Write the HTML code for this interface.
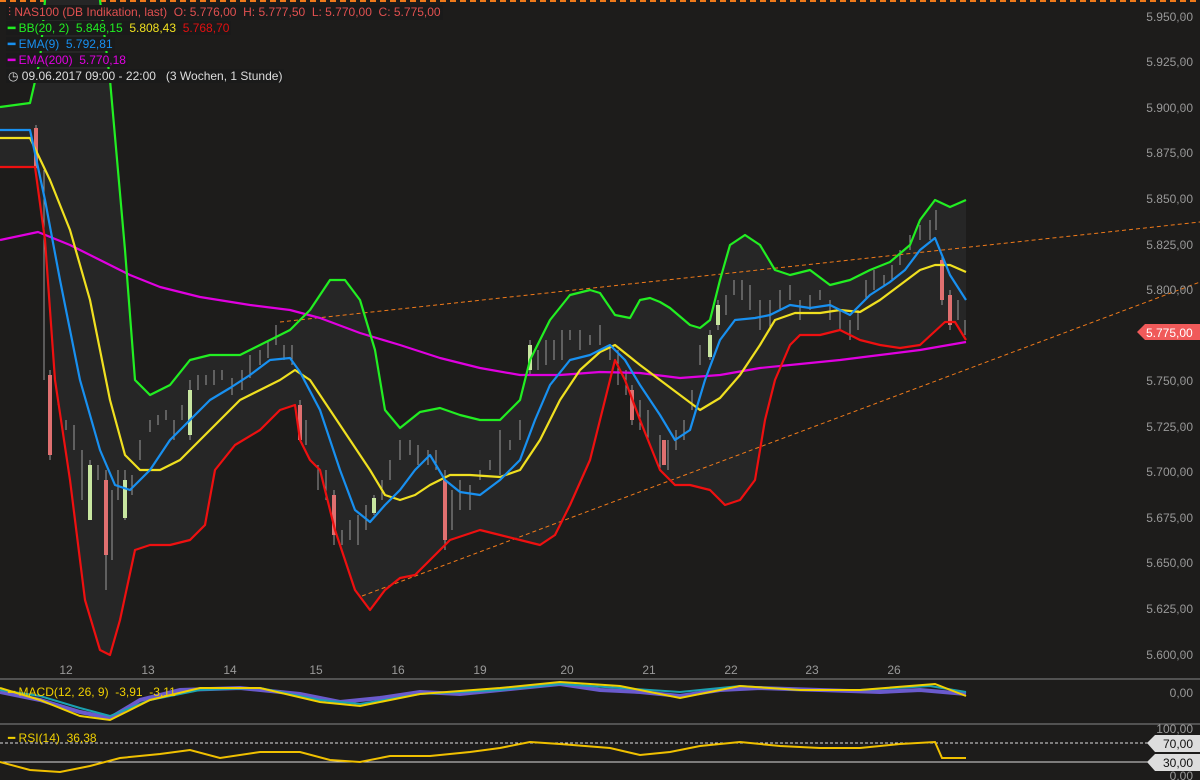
<!DOCTYPE html>
<html><head><meta charset="utf-8"><style>
body{margin:0;background:#1d1c1b;width:1200px;height:780px;overflow:hidden;font-family:"Liberation Sans",sans-serif}
svg{position:absolute;left:0;top:0}
.l{position:absolute;left:6px;font-size:12px;white-space:nowrap;background:#1a1a1a;padding:0 2px}
</style></head><body>
<svg width="1200" height="780">
<line x1="0" y1="1" x2="1200" y2="1" stroke="#f07a1a" stroke-width="2" stroke-dasharray="6,4"/>
<polygon fill="#262626" points="0,107 30,103 40,60 45,0 100,0 110,80 125,250 135,380 150,395 170,385 190,360 210,355 240,355 270,340 290,330 310,310 330,280 345,280 360,300 375,350 385,410 400,428 420,412 440,408 460,415 480,420 500,420 520,400 530,360 550,320 570,295 590,290 600,293 615,315 630,318 640,300 650,298 660,302 670,308 690,325 700,328 710,320 720,280 730,245 745,235 760,245 775,270 790,275 810,270 830,285 850,280 870,270 890,262 910,245 920,220 935,200 950,207 966,200 966,340 955,322 945,322 920,345 900,348 880,345 860,340 840,330 820,335 800,335 790,345 775,380 765,420 755,480 740,500 725,505 710,490 690,485 675,485 660,470 640,420 625,380 615,360 605,400 590,460 570,505 555,535 540,545 520,540 500,535 480,530 450,540 430,560 415,575 400,578 385,590 370,610 355,590 335,530 320,470 310,460 300,440 295,405 280,410 260,430 235,445 215,470 205,525 190,540 170,545 150,545 135,550 120,620 110,655 100,650 85,600 70,480 55,380 45,240 35,167 0,167"/>
<g stroke="#f07a1a" stroke-width="1" stroke-dasharray="4,3"><line x1="280" y1="322" x2="1200" y2="222"/><line x1="362" y1="596" x2="1200" y2="282"/></g>
<g stroke="#999" stroke-width="1">
<path d="M36 125V175M44 170V380M50 370V460M58 400V405M66 420V430M74 425V450M82 450V500M90 460V520M98 465V480M106 470V590M112 490V560M118 470V500M125 470V520M132 475V495M140 440V460M150 420V432M158 415V425M166 410V420M174 420V440M182 405V420M190 380V440M198 375V390M206 375V385M214 370V385M222 370V380M232 378V395M242 370V390M250 355V378M260 350V365M268 340V358M276 325V345M284 345V360M292 345V365M300 400V440M306 420V445M318 465V490M326 470V500M334 490V545M342 530V545M350 520V540M358 515V545M366 505V530M374 495V515M382 480V500M390 460V480M400 440V460M410 440V455M418 445V465M428 450V465M436 450V470M445 470V550M452 490V530M460 480V510M470 485V510M480 470V480M490 460V470M500 430V475M510 440V450M520 420V440M530 340V375M538 350V370M546 340V365M554 340V360M562 330V360M570 330V340M580 330V350M590 335V345M600 325V345M610 345V360M618 350V385M626 370V395M632 385V425M640 400V430M648 410V440M660 435V470M668 440V470M676 430V450M684 420V440M692 390V410M700 345V365M710 330V360M718 300V330M726 295V315M734 280V295M742 280V300M750 285V310M760 300V330M770 300V330M780 290V310M790 285V300M800 300V320M810 295V310M820 290V300M830 300V320M840 310V330M850 320V340M858 310V330M866 280V300M874 270V290M884 275V285M892 265V280M900 250V265M910 235V250M920 225V240M930 220V240M936 210V230M942 255V305M950 290V330M958 300V320M965 320V335"/>
</g>
<g>
<rect x="48" y="375" width="4" height="80" fill="#e07070"/><rect x="88" y="465" width="4" height="55" fill="#c8e6a0"/><rect x="104" y="480" width="4" height="75" fill="#e07070"/><rect x="123" y="480" width="4" height="38" fill="#c8e6a0"/><rect x="188" y="390" width="4" height="45" fill="#c8e6a0"/><rect x="298" y="405" width="4" height="35" fill="#e07070"/><rect x="332" y="495" width="4" height="40" fill="#e07070"/><rect x="372" y="498" width="4" height="15" fill="#c8e6a0"/><rect x="443" y="480" width="4" height="60" fill="#e07070"/><rect x="528" y="345" width="4" height="25" fill="#c8e6a0"/><rect x="630" y="390" width="4" height="30" fill="#e07070"/><rect x="662" y="440" width="4" height="25" fill="#e07070"/><rect x="708" y="335" width="4" height="22" fill="#c8e6a0"/><rect x="716" y="305" width="4" height="20" fill="#c8e6a0"/><rect x="940" y="260" width="4" height="40" fill="#e07070"/><rect x="948" y="295" width="4" height="30" fill="#e07070"/><rect x="34" y="128" width="4" height="40" fill="#e07070"/>
</g>
<g fill="none" stroke-width="2.2" stroke-linejoin="round">
<polyline stroke="#e000e0" points="0,240 38,232 70,245 100,260 130,275 160,287 200,297 250,305 290,310 320,318 360,333 400,345 440,358 480,368 520,375 560,375 600,372 640,373 680,378 720,375 760,368 800,364 840,360 880,355 920,350 966,342"/>
<polyline stroke="#22ee22" points="0,107 30,103 40,60 45,0"/>
<polyline stroke="#22ee22" points="100,0 110,80 125,250 135,380 150,395 170,385 190,360 210,355 240,355 270,340 290,330 310,310 330,280 345,280 360,300 375,350 385,410 400,428 420,412 440,408 460,415 480,420 500,420 520,400 530,360 550,320 570,295 590,290 600,293 615,315 630,318 640,300 650,298 660,302 670,308 690,325 700,328 710,320 720,280 730,245 745,235 760,245 775,270 790,275 810,270 830,285 850,280 870,270 890,262 910,245 920,220 935,200 950,207 966,200"/>
<polyline stroke="#ee1010" points="0,167 35,167 45,240 55,380 70,480 85,600 100,650 110,655 120,620 135,550 150,545 170,545 190,540 205,525 215,470 235,445 260,430 280,410 295,405 300,440 310,460 320,470 335,530 355,590 370,610 385,590 400,578 415,575 430,560 450,540 480,530 500,535 520,540 540,545 555,535 570,505 590,460 605,400 615,360 625,380 640,420 660,470 675,485 690,485 710,490 725,505 740,500 755,480 765,420 775,380 790,345 800,335 820,335 840,330 860,340 880,345 900,348 920,345 945,322 955,322 966,340"/>
<polyline stroke="#f0e020" points="0,138 30,138 50,180 70,230 90,300 110,400 125,455 140,470 160,470 180,460 200,440 220,420 240,400 260,390 280,380 295,370 310,380 330,410 350,440 370,470 385,495 400,500 415,495 430,485 450,475 470,475 500,477 520,470 540,440 560,400 580,370 600,352 615,345 640,365 660,380 680,395 700,410 720,398 740,375 760,345 775,320 795,313 820,313 840,310 860,312 880,300 900,285 920,270 935,265 950,265 966,272"/>
<polyline stroke="#1890f0" points="0,130 30,130 45,200 60,280 80,380 100,450 115,485 130,490 150,470 170,440 190,420 210,400 230,388 250,375 270,360 290,358 300,372 320,410 340,470 355,510 370,522 385,505 400,490 415,470 430,455 445,480 460,492 480,495 500,480 520,460 535,420 550,385 570,360 590,355 610,345 625,360 640,385 660,415 675,440 690,430 705,380 720,340 735,320 755,318 770,315 790,305 810,308 830,305 850,315 870,295 890,282 905,270 920,250 935,238 950,275 966,300"/>
</g>
<line x1="0" y1="679" x2="1200" y2="679" stroke="#888"/>
<line x1="0" y1="724" x2="1200" y2="724" stroke="#888"/>
<line x1="0" y1="743" x2="1150" y2="743" stroke="#ddd" stroke-dasharray="3,2"/>
<line x1="0" y1="762" x2="1150" y2="762" stroke="#ddd"/>
<g fill="none" stroke-width="2">
<polyline stroke="#6a5acd" stroke-width="4" points="0,692 40,700 80,712 110,718 140,700 180,690 240,688 300,694 340,702 380,698 420,692 460,694 520,688 560,684 600,690 640,692 680,696 720,690 760,688 820,690 880,692 920,690 966,694"/>
<polyline stroke="#1aa0b0" points="0,690 40,696 80,708 110,716 150,700 200,690 260,688 320,700 360,704 420,694 500,690 560,684 620,688 680,692 740,686 800,690 860,690 930,686 966,692"/>
<polyline stroke="#f0d000" points="0,688 40,700 80,716 110,720 150,700 200,688 260,688 320,702 360,706 420,694 500,688 560,682 620,686 680,698 740,686 800,690 860,690 935,684 966,696"/>
<polyline stroke="#f0c000" points="0,762 30,770 60,772 90,766 120,758 160,754 190,750 220,758 260,752 300,752 330,760 360,762 390,756 430,756 470,752 500,748 530,742 560,744 610,748 640,755 670,752 700,746 740,742 780,746 820,748 860,748 900,744 935,742 942,758 966,758"/>
</g>
<g font-family="Liberation Sans" font-size="12" fill="#999" text-anchor="end">
<text x="1193" y="21">5.950,00</text><text x="1193" y="66">5.925,00</text><text x="1193" y="112">5.900,00</text><text x="1193" y="157">5.875,00</text><text x="1193" y="203">5.850,00</text><text x="1193" y="249">5.825,00</text><text x="1193" y="294">5.800,00</text><text x="1193" y="385">5.750,00</text><text x="1193" y="431">5.725,00</text><text x="1193" y="476">5.700,00</text><text x="1193" y="522">5.675,00</text><text x="1193" y="567">5.650,00</text><text x="1193" y="613">5.625,00</text><text x="1193" y="659">5.600,00</text><text x="1193" y="697">0,00</text><text x="1193" y="733">100,00</text><text x="1193" y="780">0,00</text>
</g>
<polygon points="1137,332 1145,324 1200,324 1200,340 1145,340" fill="#f05a5a"/>
<text x="1146" y="337" font-family="Liberation Sans" font-size="12" fill="#fff">5.775,00</text>
<polygon points="1147,743 1155,735 1200,735 1200,752 1155,752" fill="#ddd"/>
<polygon points="1147,762 1155,754 1200,754 1200,771 1155,771" fill="#ddd"/>
<text x="1193" y="748" text-anchor="end" font-family="Liberation Sans" font-size="12" fill="#111">70,00</text>
<text x="1193" y="767" text-anchor="end" font-family="Liberation Sans" font-size="12" fill="#111">30,00</text>
<g font-family="Liberation Sans" font-size="12" fill="#999" text-anchor="middle">
<text x="66" y="674">12</text><text x="148" y="674">13</text><text x="230" y="674">14</text><text x="316" y="674">15</text><text x="398" y="674">16</text><text x="480" y="674">19</text><text x="567" y="674">20</text><text x="649" y="674">21</text><text x="731" y="674">22</text><text x="812" y="674">23</text><text x="894" y="674">26</text>
</g>
<g stroke="#555"><path d="M1180 17h6M1180 62h6M1180 108h6M1180 153h6M1180 199h6M1180 245h6M1180 290h6M1180 381h6M1180 427h6M1180 472h6M1180 518h6M1180 563h6M1180 609h6M1180 655h6"/></g>
</svg>
<div class="l" style="top:5px;color:#e05050">⫶ NAS100 (DB Indikation, last)&nbsp; O: 5.776,00&nbsp; H: 5.777,50&nbsp; L: 5.770,00&nbsp; C: 5.775,00</div>
<div class="l" style="top:21px;color:#22ee22"><b>━</b> BB(20, 2)&nbsp; 5.848,15&nbsp; <span style="color:#f0e020">5.808,43</span>&nbsp; <span style="color:#e01010">5.768,70</span></div>
<div class="l" style="top:37px;color:#1890f0"><b>━</b> EMA(9)&nbsp; 5.792,81</div>
<div class="l" style="top:53px;color:#e000e0"><b>━</b> EMA(200)&nbsp; 5.770,18</div>
<div class="l" style="top:69px;color:#ddd">◷ 09.06.2017 09:00 - 22:00&nbsp;&nbsp; (3 Wochen, 1 Stunde)</div>
<div class="l" style="top:685px;color:#f0d000;background:none">━ MACD(12, 26, 9)&nbsp; -3,91&nbsp; -3,11</div>
<div class="l" style="top:731px;color:#f0d000;background:none">━ RSI(14)&nbsp; 36,38</div>
</body></html>
